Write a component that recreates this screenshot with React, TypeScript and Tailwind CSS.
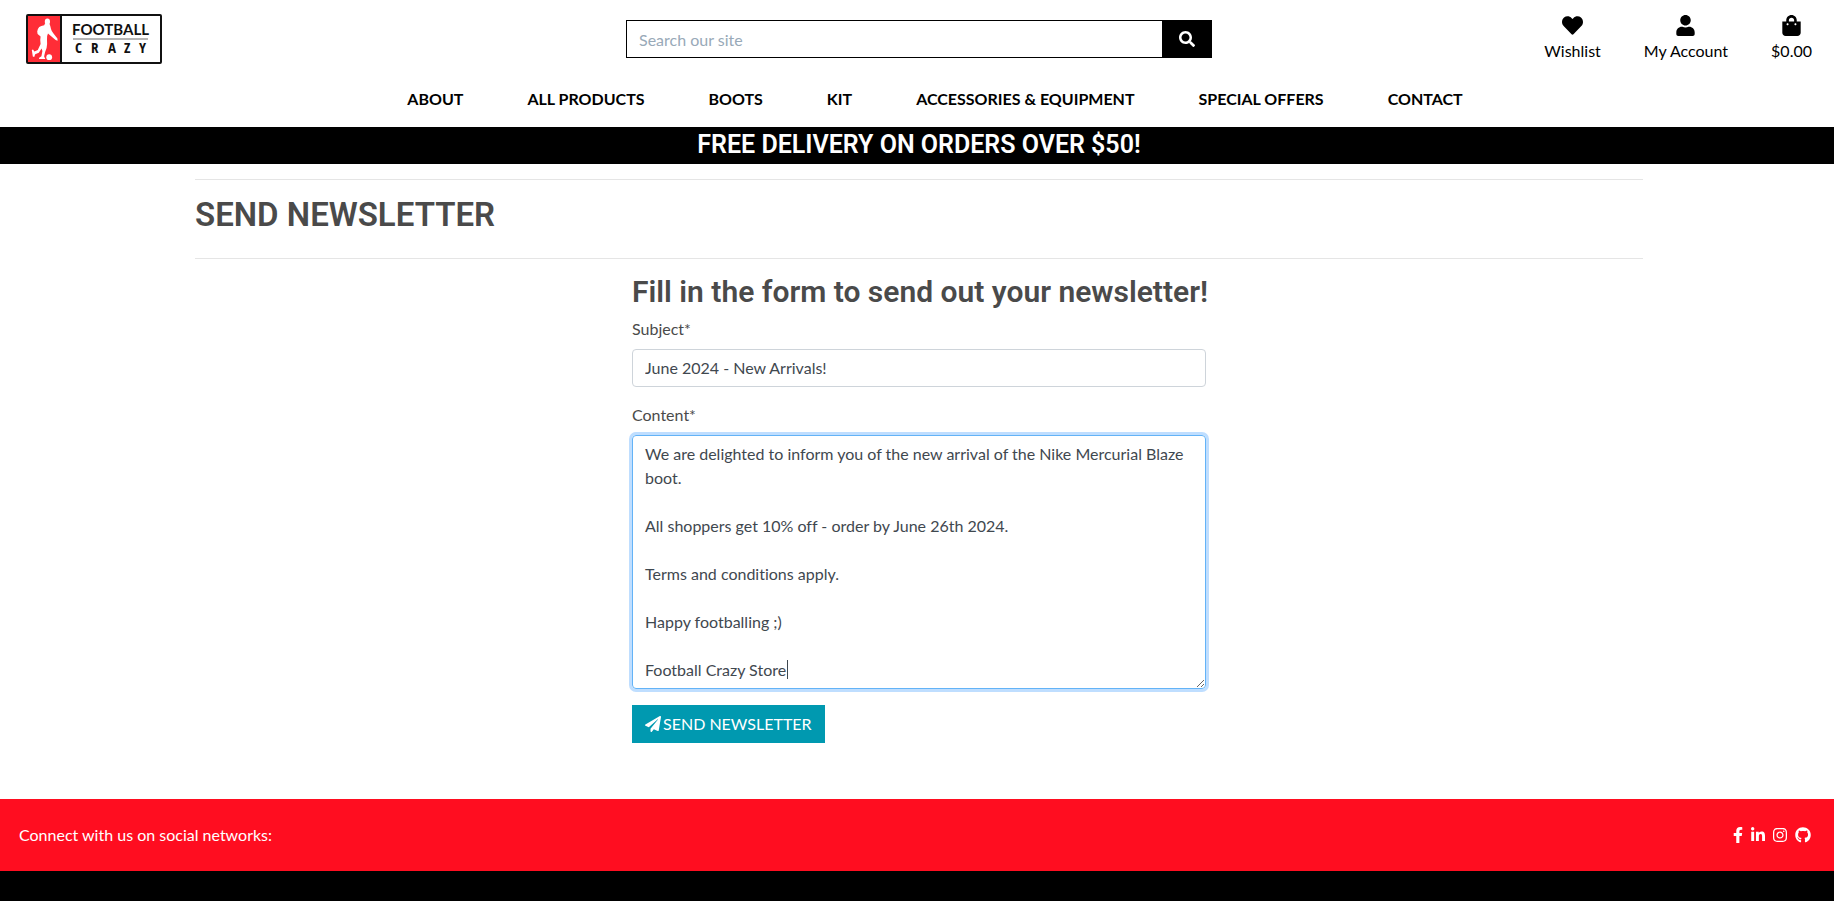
import { FaFacebookF, FaGithub, FaHeart, FaInstagram, FaLinkedinIn, FaPaperPlane, FaSearch, FaShoppingBag, FaUser } from "react-icons/fa";

const navLinks = ["ABOUT", "ALL PRODUCTS", "BOOTS", "KIT", "ACCESSORIES & EQUIPMENT", "SPECIAL OFFERS", "CONTACT"];

const accountLinks = [
  { label: "Wishlist", Icon: FaHeart },
  { label: "My Account", Icon: FaUser },
  { label: "$0.00", Icon: FaShoppingBag },
];

const socialLinks = [
  { label: "Facebook", Icon: FaFacebookF, size: "w-[10px]" },
  { label: "LinkedIn", Icon: FaLinkedinIn, size: "w-[14px]" },
  { label: "Instagram", Icon: FaInstagram, size: "w-[14px]" },
  { label: "GitHub", Icon: FaGithub, size: "w-4" },
];

const message = `We are delighted to inform you of the new arrival of the Nike Mercurial Blaze boot.

All shoppers get 10% off - order by June 26th 2024.

Terms and conditions apply.

Happy footballing ;)

Football Crazy Store`;

function Logo() {
  return (
    <svg viewBox="0 0 136 50" className="h-[50px] w-[136px]" role="img" aria-label="Football Crazy">
      <rect x="1" y="1" width="134" height="48" rx="1" fill="#fff" stroke="#111" strokeWidth="2" />
      <rect x="2" y="2" width="33" height="46" fill="#ff2d37" />
      <rect x="34" y="1" width="2" height="48" fill="#111" />
      <g fill="#fff">
        <ellipse cx="21.4" cy="7.8" rx="2.6" ry="3.2" />
        <path d="M19 9.5 L23.5 10 Q24.5 12 25 15 Q25.6 17.5 27.5 19.5 L31.4 24.5 L31.6 26.8 L29.6 26 L24 21.2 L22 19.5 Q20.6 22 21 25.5 Q21.4 30 20.6 34 Q18.8 38 18.2 42 Q17.8 43.4 19.2 44 L19 45 L13 45 L13.2 43.8 L15.4 42.2 L16.4 37 L15.6 34.6 L12.8 38.8 L9.2 40.2 L8.2 43 L6.8 42.6 L5.8 36 L7 35.6 L8.4 37.6 L11.8 36 L14.6 30 Q13.8 26.5 14.6 22.5 L13.4 21.4 L11.6 20 L11.2 17.5 Q11.6 14.5 13.2 13 Q15 11.8 18.2 11.2 Z" />
        <circle cx="23.2" cy="43.2" r="2.9" />
      </g>
      <text x="46" y="21" fontFamily="Lato" fontWeight="700" fontSize="15" fill="#111">FOOTBALL</text>
      <rect x="47" y="24" width="75" height="2" fill="#b5b5b5" />
      <text x="49 65 82 98 113" y="39" fontFamily="Liberation Sans Narrow, Open Sans Condensed, Roboto Condensed, sans-serif" fontWeight="700" fontSize="15" fill="#111">CRAZY</text>
    </svg>
  );
}

export default function App() {
  return (
    <div className="flex min-h-screen flex-col bg-white font-['Lato',sans-serif] text-base leading-6 text-[#4a4a4a] [font-variant-ligatures:none]">
      <header className="text-black">
        <div className="flex items-start justify-between pr-[22px] pl-[26px]">
          <a href="#home" className="flex flex-1 pt-[14px]"><Logo /></a>
          <form className="mt-5 flex h-[38px] w-[586px] border border-black" onSubmit={(e) => e.preventDefault()}>
            <input type="search" aria-label="Search our site" placeholder="Search our site" className="min-w-0 flex-1 px-3 pt-0.5 outline-none placeholder:text-[#98a9b8]" />
            <button type="submit" aria-label="Search" className="flex w-[49px] items-center justify-center bg-black text-white"><FaSearch /></button>
          </form>
          <ul className="flex flex-1 justify-end gap-[43px] pt-[15px]">
            {accountLinks.map(({ label, Icon }) => (
              <li key={label}>
                <a href="#account" className="flex flex-col items-center">
                  <Icon className="h-[21px] w-[21px]" />
                  <span className="mt-[3px]">{label}</span>
                </a>
              </li>
            ))}
          </ul>
        </div>
        <nav className="flex h-[63px] justify-center pt-[23px] pl-9">
          <ul className="flex gap-16 font-bold">
            {navLinks.map((label) => (
              <li key={label}><a href="#nav">{label}</a></li>
            ))}
          </ul>
        </nav>
      </header>
      <div className="flex h-[37px] items-center justify-center bg-black pb-0.5 pl-1 text-white">
        <h2 className="font-['Roboto',sans-serif] text-[25px] leading-7 font-semibold">FREE DELIVERY ON ORDERS OVER $50!</h2>
      </div>
      <main className="pl-1">
        <div className="mx-auto mt-[15px] w-full max-w-[1448px]">
          <div className="border-y border-[#e5e5e5] pt-4 pb-6">
            <h1 className="font-['Roboto',sans-serif] text-[33px] leading-[38px] font-semibold">SEND NEWSLETTER</h1>
          </div>
          <form className="mx-auto mt-4 w-[574px] max-w-full" onSubmit={(e) => e.preventDefault()}>
            <h2 className="mb-2 font-['Roboto',sans-serif] text-[30px] leading-[34px] font-semibold whitespace-nowrap">Fill in the form to send out your newsletter!</h2>
            <label htmlFor="subject" className="mb-2 block">Subject*</label>
            <input id="subject" type="text" defaultValue="June 2024 - New Arrivals!" className="mb-4 block h-[38px] w-full rounded border border-[#ced4da] px-3 pb-0.5 text-[#3f484f] outline-none" />
            <label htmlFor="content" className="mb-2 block">Content*</label>
            <div className="relative mb-4">
              <textarea id="content" rows={10} defaultValue={message} className="block w-full resize-y rounded border border-[#63b3f7] px-3 py-1.5 text-[#3f484f] shadow-[0_0_0_3px_#bfdeff] outline-none" />
              <span aria-hidden="true" className="pointer-events-none absolute top-[225px] left-[155px] h-[19px] w-px bg-[#3f484f]" />
            </div>
            <button type="submit" className="flex h-[38px] items-center gap-0.5 bg-[#0099b0] px-[13px] text-white"><FaPaperPlane />SEND NEWSLETTER</button>
          </form>
        </div>
      </main>
      <footer className="mt-14 flex flex-1 flex-col bg-black">
        <div className="flex h-[72px] items-center justify-between bg-[#ff0d20] pr-[23px] pl-[19px] text-white">
          <span>Connect with us on social networks:</span>
          <ul className="flex gap-2">
            {socialLinks.map(({ label, Icon, size }) => (
              <li key={label}><a href="#social" aria-label={label}><Icon className={`h-4 ${size}`} /></a></li>
            ))}
          </ul>
        </div>
      </footer>
    </div>
  );
}
